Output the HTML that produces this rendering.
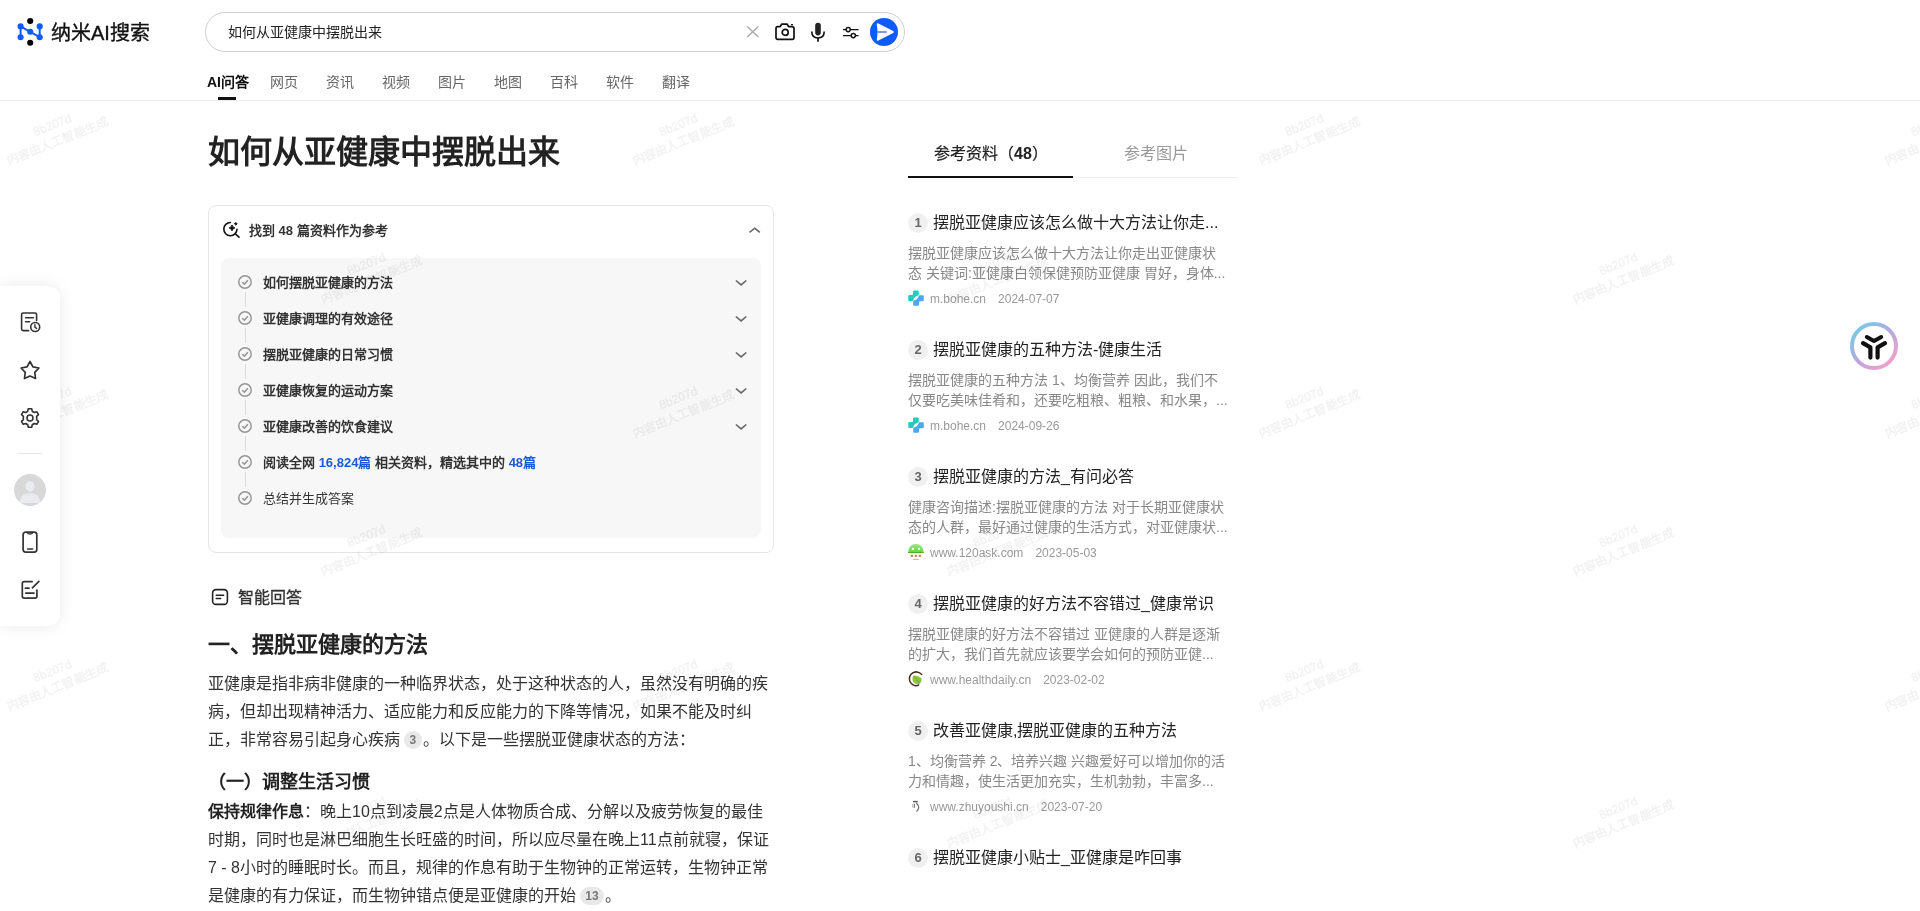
<!DOCTYPE html>
<html lang="zh-CN">
<head>
<meta charset="utf-8">
<title>纳米AI搜索</title>
<style>
*{margin:0;padding:0;box-sizing:border-box}
html,body{width:1920px;height:911px;overflow:hidden;background:#fff;font-family:"Liberation Sans",sans-serif;color:#222}
.a{position:absolute}
.t{white-space:nowrap}
svg{display:block}
/* watermark */
.wm{position:absolute;z-index:10;width:140px;height:36px;transform:rotate(-22deg);color:#f1f1f1;-webkit-text-stroke:0.3px #f1f1f1;mix-blend-mode:multiply;text-align:center;font-size:12px;line-height:18px;white-space:nowrap;pointer-events:none}
.wm i{font-style:normal;position:relative;left:1.5px;top:1px}
/* header */
.hdr-line{left:0;top:100px;width:1920px;height:1px;background:#eeeeee}
.search{left:205px;top:12px;width:700px;height:40px;border:1px solid #cfcfcf;border-radius:20px}
.q{left:228px;top:22px;font-size:14px;line-height:20px;color:#222}
.tab{top:72px;font-size:14px;line-height:20px;color:#666}
.tab.on{color:#111;font-weight:bold}
/* main */
.title{left:208px;top:129px;font-size:32px;line-height:46px;font-weight:bold;color:#222}
.box{left:208px;top:205px;width:566px;height:348px;border:1px solid #e6e6e6;border-radius:8px}
.inner{left:221px;top:258px;width:540px;height:280px;background:#f7f7f7;border-radius:8px}
.row{left:263px;font-size:13px;line-height:18px;color:#333;font-weight:bold}
.row.n{font-weight:normal}
.blue{color:#1a5ad8}
.chk{left:237px}
.vl{left:245px;width:1px;background:#dcdcdc}
.para{left:208px;width:566px;font-size:16px;line-height:28px;color:#333}
.cite{display:inline-block;width:17.5px;height:18px;border-radius:9px;background:#e8e8e8;color:#777;font-size:12px;font-weight:bold;line-height:19px;text-align:center;vertical-align:1px;margin:0 1px 0 4px}
/* right */
.rtab{top:143px;font-size:16px;line-height:22px}
.item{left:908px;width:320px}
.badge{position:absolute;left:0;top:0;width:20px;height:20px;border-radius:10px;background:#f0f0f0;color:#666;font-size:13px;font-weight:bold;line-height:20px;text-align:center}
.ititle{position:absolute;left:25px;top:-1px;font-size:16px;line-height:22px;color:#222;white-space:nowrap}
.snip{position:absolute;left:0;top:30px;width:340px;font-size:14px;line-height:20px;color:#888;height:40px;white-space:nowrap}
.meta{position:absolute;left:0;top:78px;height:16px;font-size:12px;line-height:16px;color:#999;white-space:nowrap;display:flex;align-items:center}
.fav{width:16px;height:16px;flex:none;position:relative;top:-1px}
.dom{margin-left:6px}
.dt{margin-left:12px}
/* sidebar */
.side{left:0;top:286px;width:60px;height:340px;background:#fff;border-radius:0 12px 12px 0;box-shadow:0 0 16px rgba(0,0,0,0.09)}
</style>
</head>
<body>

<!-- watermarks -->
<div class="wm" style="left:-16px;top:115px"><i>8b207d</i><br>内容由人工智能生成</div>
<div class="wm" style="left:610px;top:115px"><i>8b207d</i><br>内容由人工智能生成</div>
<div class="wm" style="left:1236px;top:115px"><i>8b207d</i><br>内容由人工智能生成</div>
<div class="wm" style="left:1862px;top:115px"><i>8b207d</i><br>内容由人工智能生成</div>
<div class="wm" style="left:-16px;top:388px"><i>8b207d</i><br>内容由人工智能生成</div>
<div class="wm" style="left:610px;top:388px"><i>8b207d</i><br>内容由人工智能生成</div>
<div class="wm" style="left:1236px;top:388px"><i>8b207d</i><br>内容由人工智能生成</div>
<div class="wm" style="left:1862px;top:388px"><i>8b207d</i><br>内容由人工智能生成</div>
<div class="wm" style="left:-16px;top:661px"><i>8b207d</i><br>内容由人工智能生成</div>
<div class="wm" style="left:610px;top:661px"><i>8b207d</i><br>内容由人工智能生成</div>
<div class="wm" style="left:1236px;top:661px"><i>8b207d</i><br>内容由人工智能生成</div>
<div class="wm" style="left:1862px;top:661px"><i>8b207d</i><br>内容由人工智能生成</div>
<div class="wm" style="left:298px;top:254px"><i>8b207d</i><br>内容由人工智能生成</div>
<div class="wm" style="left:924px;top:254px"><i>8b207d</i><br>内容由人工智能生成</div>
<div class="wm" style="left:1550px;top:254px"><i>8b207d</i><br>内容由人工智能生成</div>
<div class="wm" style="left:298px;top:526px"><i>8b207d</i><br>内容由人工智能生成</div>
<div class="wm" style="left:924px;top:526px"><i>8b207d</i><br>内容由人工智能生成</div>
<div class="wm" style="left:1550px;top:526px"><i>8b207d</i><br>内容由人工智能生成</div>
<div class="wm" style="left:298px;top:798px"><i>8b207d</i><br>内容由人工智能生成</div>
<div class="wm" style="left:924px;top:798px"><i>8b207d</i><br>内容由人工智能生成</div>
<div class="wm" style="left:1550px;top:798px"><i>8b207d</i><br>内容由人工智能生成</div>


<!-- ============ HEADER ============ -->
<svg class="a" style="left:10px;top:12px" width="40" height="40" viewBox="10 12 40 40">
  <g stroke="#0f5bff" stroke-width="2" fill="none">
    <line x1="20.6" y1="26.4" x2="20.6" y2="37.2"/>
    <line x1="39.7" y1="26.4" x2="39.7" y2="37.2"/>
    <polyline points="20.6,26.4 30.2,31.8 39.7,37.2"/>
  </g>
  <g fill="#0f5bff">
    <circle cx="20.6" cy="26.4" r="3.05"/><circle cx="20.6" cy="37.2" r="3.05"/>
    <circle cx="39.7" cy="26.4" r="3.05"/><circle cx="39.7" cy="37.2" r="3.05"/>
    <circle cx="30.2" cy="31.8" r="3.05"/>
  </g>
  <g fill="#000"><circle cx="30.2" cy="21" r="3.05"/><circle cx="30.2" cy="42.7" r="3.05"/></g>
</svg>
<div class="a t" style="left:51px;top:19px;font-size:20px;line-height:28px;color:#111;-webkit-text-stroke:0.35px #111">纳米AI搜索</div>

<div class="a search"></div>
<div class="a t q">如何从亚健康中摆脱出来</div>
<!-- clear X -->
<svg class="a" style="left:745px;top:24px" width="16" height="16" viewBox="0 0 16 16">
  <path d="M2.2 2.4 L13.4 13 M13.4 2.4 L2.2 13" stroke="#a8a8a8" stroke-width="1.4" fill="none"/>
</svg>
<!-- camera -->
<svg class="a" style="left:774px;top:21px" width="22" height="21" viewBox="0 0 22 21">
  <path d="M3.5 5.6 H6.2 L7.6 3.2 H13.2 L14.6 5.6 H18 Q20 5.6 20 7.6 V16.6 Q20 18.3 18.3 18.3 H3.7 Q2 18.3 2 16.6 V7.4 Q2 5.6 3.5 5.6 Z" stroke="#111" stroke-width="1.7" fill="none" stroke-linejoin="round"/>
  <circle cx="11.2" cy="11.4" r="3" stroke="#111" stroke-width="1.7" fill="none"/>
  <path d="M17 3.6 H19" stroke="#111" stroke-width="1.3"/>
</svg>
<!-- mic -->
<svg class="a" style="left:809px;top:21px" width="18" height="22" viewBox="0 0 18 22">
  <rect x="6.2" y="1.8" width="5.6" height="12.6" rx="2.8" fill="#222"/>
  <path d="M2.8 10.6 Q2.8 17 9 17 Q15.2 17 15.2 10.6" stroke="#111" stroke-width="1.6" fill="none"/>
  <path d="M9 17 V20.8" stroke="#111" stroke-width="1.7"/>
</svg>
<!-- sliders -->
<svg class="a" style="left:841px;top:24px" width="20" height="17" viewBox="0 0 20 17">
  <path d="M2 5.6 H17.5 M2 11.6 H17.5" stroke="#111" stroke-width="1.4"/>
  <circle cx="7.2" cy="5.6" r="2.1" fill="#fff" stroke="#111" stroke-width="1.4"/>
  <circle cx="12.3" cy="11.6" r="2.1" fill="#fff" stroke="#111" stroke-width="1.4"/>
</svg>
<!-- send -->
<svg class="a" style="left:870px;top:18px" width="28" height="28" viewBox="0 0 28 28">
  <circle cx="14" cy="14" r="14" fill="#0f5bff"/>
  <path d="M8.4 5.5 Q6.5 4.6 6.8 6.8 Q7.5 10.4 7.5 14 Q7.5 17.6 6.8 21.2 Q6.5 23.4 8.4 22.5 L23.2 15 Q24.6 14 23.2 13 Z" fill="#fff"/>
  <path d="M7.4 14 H16.8" stroke="#4f6fc4" stroke-width="1.4"/>
</svg>

<div class="a t tab on" style="left:207px">AI问答</div>
<div class="a" style="left:218px;top:97px;width:18px;height:3px;background:#111"></div>
<div class="a t tab" style="left:270px">网页</div>
<div class="a t tab" style="left:326px">资讯</div>
<div class="a t tab" style="left:382px">视频</div>
<div class="a t tab" style="left:438px">图片</div>
<div class="a t tab" style="left:494px">地图</div>
<div class="a t tab" style="left:550px">百科</div>
<div class="a t tab" style="left:606px">软件</div>
<div class="a t tab" style="left:662px">翻译</div>
<div class="a hdr-line"></div>

<!-- ============ SIDEBAR ============ -->
<div style="position:absolute;left:0;top:0;z-index:20">
<div class="a side"></div>
<!-- history doc -->
<svg class="a" style="left:18px;top:310px" width="24" height="24" viewBox="0 0 24 24">
  <path d="M10.6 20.6 H5.2 Q3.6 20.6 3.6 19 V4.6 Q3.6 3 5.2 3 H17 Q18.6 3 18.6 4.6 V10.6" stroke="#333" stroke-width="1.6" fill="none" stroke-linecap="round"/>
  <path d="M7.6 7.8 H15.4 M7.6 11.8 H11.6" stroke="#333" stroke-width="1.6" stroke-linecap="round"/>
  <circle cx="17.2" cy="17" r="4.5" stroke="#333" stroke-width="1.6" fill="#fff"/>
  <path d="M16.9 14.8 V17.1 L18.6 18.6" stroke="#333" stroke-width="1.4" fill="none" stroke-linecap="round"/>
</svg>
<!-- star -->
<svg class="a" style="left:18px;top:358px" width="24" height="24" viewBox="0 0 24 24">
  <path d="M12.00 3.50 L14.94 8.85 L20.94 10.00 L16.76 14.45 L17.53 20.50 L12.00 17.90 L6.47 20.50 L7.24 14.45 L3.06 10.00 L9.06 8.85Z" stroke="#333" stroke-width="1.7" fill="none" stroke-linejoin="round"/>
</svg>
<!-- gear -->
<svg class="a" style="left:18px;top:406px" width="24" height="24" viewBox="0 0 24 24">
  <path d="M10.3 2.8 H13.7 L14.3 5.4 Q15.4 5.8 16.3 6.5 L18.8 5.7 L20.5 8.6 L18.6 10.4 Q18.8 12 18.6 13.6 L20.5 15.4 L18.8 18.3 L16.3 17.5 Q15.4 18.2 14.3 18.6 L13.7 21.2 H10.3 L9.7 18.6 Q8.6 18.2 7.7 17.5 L5.2 18.3 L3.5 15.4 L5.4 13.6 Q5.2 12 5.4 10.4 L3.5 8.6 L5.2 5.7 L7.7 6.5 Q8.6 5.8 9.7 5.4 Z" stroke="#333" stroke-width="1.6" fill="none" stroke-linejoin="round"/>
  <circle cx="12" cy="12" r="3" stroke="#333" stroke-width="1.6" fill="none"/>
</svg>
<div class="a" style="left:18px;top:453px;width:24px;height:1px;background:#e6e6e6"></div>
<!-- avatar -->
<svg class="a" style="left:14px;top:474px" width="32" height="32" viewBox="0 0 32 32">
  <circle cx="16" cy="16" r="16" fill="#d8d8d8"/>
  <clipPath id="avc"><circle cx="16" cy="16" r="16"/></clipPath>
  <g clip-path="url(#avc)" fill="#e9ebef">
    <ellipse cx="16" cy="12.3" rx="4.6" ry="5.3"/>
    <path d="M5.5 29 Q6.5 20 13 19.5 H19 Q25.5 20 26.5 29 Z"/>
  </g>
</svg>
<!-- phone -->
<svg class="a" style="left:18px;top:530px" width="24" height="24" viewBox="0 0 24 24">
  <rect x="5.1" y="2.2" width="13.7" height="20" rx="2.6" stroke="#333" stroke-width="1.7" fill="none"/>
  <path d="M9.4 3 Q9.8 4 12 4 Q14.2 4 14.6 3" stroke="#333" stroke-width="1.4" fill="none"/>
  <path d="M9.6 19 H14.6" stroke="#333" stroke-width="1.6" stroke-linecap="round"/>
</svg>
<!-- edit -->
<svg class="a" style="left:18px;top:578px" width="24" height="24" viewBox="0 0 24 24">
  <path d="M14.2 3.6 H6.2 Q4.3 3.6 4.3 5.5 V18.3 Q4.3 20.2 6.2 20.2 H17 Q18.9 20.2 18.9 18.3 V12" stroke="#333" stroke-width="1.7" fill="none" stroke-linecap="round"/>
  <path d="M7.4 10.2 H11 M7.8 15.1 H16" stroke="#333" stroke-width="1.7" stroke-linecap="round"/>
  <path d="M14.4 9.9 L20.9 3.4" stroke="#333" stroke-width="1.7" stroke-linecap="round"/>
</svg>

</div>

<!-- ============ MAIN ============ -->
<div class="a t title">如何从亚健康中摆脱出来</div>

<div class="a box"></div>
<svg class="a" style="left:221px;top:220px" width="20" height="20" viewBox="0 0 20 20">
  <path d="M9.4 2.5 A6.6 6.6 0 1 0 16 9.3" stroke="#111" stroke-width="1.6" fill="none" stroke-linecap="round"/>
  <path d="M14.4 13.8 L18 17.1" stroke="#111" stroke-width="1.6" stroke-linecap="round"/>
  <path d="M11 4.9 Q11.4 7.3 13.9 7.9 Q11.4 8.5 11 10.9 Q10.6 8.5 8.1 7.9 Q10.6 7.3 11 4.9Z" fill="#111" stroke="#111" stroke-width="0.9" stroke-linejoin="round"/>
  <path d="M14.8 2.4 L16.2 3.8 L14.8 5.2 L13.4 3.8Z" fill="#111" stroke="#111" stroke-width="0.8" stroke-linejoin="round"/>
</svg>
<div class="a t" style="left:249px;top:222px;font-size:13px;line-height:18px;color:#333;font-weight:bold">找到 48 篇资料作为参考</div>
<svg class="a" style="left:746px;top:224px" width="18" height="12" viewBox="0 0 18 12">
  <path d="M3.5 8.4 L8.8 4.2 L13.8 8.4" stroke="#666" stroke-width="1.6" fill="none"/>
</svg>

<div class="a inner"></div>
<svg class="a chk" style="top:274px" width="16" height="16" viewBox="0 0 16 16"><circle cx="8" cy="8" r="6.2" stroke="#969696" stroke-width="1.45" fill="none"/><path d="M5.2 8.2 L7.4 10.1 L10.9 6.2" stroke="#969696" stroke-width="1.5" fill="none"/></svg>
<div class="a t row" style="top:274px">如何摆脱亚健康的方法</div>
<svg class="a" style="left:733px;top:276px" width="16" height="12" viewBox="0 0 16 12"><path d="M2.9 4.5 L8.1 8.9 L13.3 4.5" stroke="#666" stroke-width="1.6" fill="none"/></svg>
<div class="a vl" style="top:292px;height:15px"></div>
<svg class="a chk" style="top:310px" width="16" height="16" viewBox="0 0 16 16"><circle cx="8" cy="8" r="6.2" stroke="#969696" stroke-width="1.45" fill="none"/><path d="M5.2 8.2 L7.4 10.1 L10.9 6.2" stroke="#969696" stroke-width="1.5" fill="none"/></svg>
<div class="a t row" style="top:310px">亚健康调理的有效途径</div>
<svg class="a" style="left:733px;top:312px" width="16" height="12" viewBox="0 0 16 12"><path d="M2.9 4.5 L8.1 8.9 L13.3 4.5" stroke="#666" stroke-width="1.6" fill="none"/></svg>
<div class="a vl" style="top:328px;height:15px"></div>
<svg class="a chk" style="top:346px" width="16" height="16" viewBox="0 0 16 16"><circle cx="8" cy="8" r="6.2" stroke="#969696" stroke-width="1.45" fill="none"/><path d="M5.2 8.2 L7.4 10.1 L10.9 6.2" stroke="#969696" stroke-width="1.5" fill="none"/></svg>
<div class="a t row" style="top:346px">摆脱亚健康的日常习惯</div>
<svg class="a" style="left:733px;top:348px" width="16" height="12" viewBox="0 0 16 12"><path d="M2.9 4.5 L8.1 8.9 L13.3 4.5" stroke="#666" stroke-width="1.6" fill="none"/></svg>
<div class="a vl" style="top:364px;height:15px"></div>
<svg class="a chk" style="top:382px" width="16" height="16" viewBox="0 0 16 16"><circle cx="8" cy="8" r="6.2" stroke="#969696" stroke-width="1.45" fill="none"/><path d="M5.2 8.2 L7.4 10.1 L10.9 6.2" stroke="#969696" stroke-width="1.5" fill="none"/></svg>
<div class="a t row" style="top:382px">亚健康恢复的运动方案</div>
<svg class="a" style="left:733px;top:384px" width="16" height="12" viewBox="0 0 16 12"><path d="M2.9 4.5 L8.1 8.9 L13.3 4.5" stroke="#666" stroke-width="1.6" fill="none"/></svg>
<div class="a vl" style="top:400px;height:15px"></div>
<svg class="a chk" style="top:418px" width="16" height="16" viewBox="0 0 16 16"><circle cx="8" cy="8" r="6.2" stroke="#969696" stroke-width="1.45" fill="none"/><path d="M5.2 8.2 L7.4 10.1 L10.9 6.2" stroke="#969696" stroke-width="1.5" fill="none"/></svg>
<div class="a t row" style="top:418px">亚健康改善的饮食建议</div>
<svg class="a" style="left:733px;top:420px" width="16" height="12" viewBox="0 0 16 12"><path d="M2.9 4.5 L8.1 8.9 L13.3 4.5" stroke="#666" stroke-width="1.6" fill="none"/></svg>
<div class="a vl" style="top:436px;height:15px"></div>
<svg class="a chk" style="top:454px" width="16" height="16" viewBox="0 0 16 16"><circle cx="8" cy="8" r="6.2" stroke="#969696" stroke-width="1.45" fill="none"/><path d="M5.2 8.2 L7.4 10.1 L10.9 6.2" stroke="#969696" stroke-width="1.5" fill="none"/></svg>
<div class="a t row" style="top:454px">阅读全网 <span class="blue">16,824篇</span> 相关资料，精选其中的 <span class="blue">48篇</span></div>
<div class="a vl" style="top:472px;height:15px"></div>
<svg class="a chk" style="top:490px" width="16" height="16" viewBox="0 0 16 16"><circle cx="8" cy="8" r="6.2" stroke="#969696" stroke-width="1.45" fill="none"/><path d="M5.2 8.2 L7.4 10.1 L10.9 6.2" stroke="#969696" stroke-width="1.5" fill="none"/></svg>
<div class="a t row n" style="top:490px">总结并生成答案</div>


<!-- 智能回答 -->
<svg class="a" style="left:210px;top:587px" width="20" height="20" viewBox="0 0 20 20">
  <rect x="2.6" y="2.6" width="14.8" height="14.8" rx="3.4" stroke="#222" stroke-width="1.6" fill="none"/>
  <path d="M6.2 8.2 H13.6 M6.2 11.4 H10.6" stroke="#222" stroke-width="1.5" stroke-linecap="round"/>
</svg>
<div class="a t" style="left:238px;top:586px;font-size:16px;line-height:24px;color:#333;-webkit-text-stroke:0.35px #333">智能回答</div>

<div class="a t" style="left:208px;top:630px;font-size:22px;line-height:30px;color:#222;font-weight:bold">一、摆脱亚健康的方法</div>
<div class="a para" style="top:670px">亚健康是指非病非健康的一种临界状态，处于这种状态的人，虽然没有明确的疾病，但却出现精神活力、适应能力和反应能力的下降等情况，如果不能及时纠正，非常容易引起身心疾病<span class="cite">3</span>。以下是一些摆脱亚健康状态的方法：</div>
<div class="a t" style="left:208px;top:769px;font-size:18px;line-height:26px;color:#222;font-weight:bold">（一）调整生活习惯</div>
<div class="a para" style="top:798px"><b style="color:#222">保持规律作息</b>：晚上10点到凌晨2点是人体物质合成、分解以及疲劳恢复的最佳时期，同时也是淋巴细胞生长旺盛的时间，所以应尽量在晚上11点前就寝，保证7 - 8小时的睡眠时长。而且，规律的作息有助于生物钟的正常运转，生物钟正常是健康的有力保证，而生物钟错点便是亚健康的开始<span class="cite" style="width:24px">13</span>。</div>

<!-- ============ RIGHT PANEL ============ -->
<div class="a t rtab" style="left:934px;color:#222;-webkit-text-stroke:0.2px #222">参考资料（<b style="-webkit-text-stroke:0">48</b>）</div>
<div class="a t rtab" style="left:1124px;color:#999">参考图片</div>
<div class="a" style="left:908px;top:177px;width:330px;height:1px;background:#eeeeee"></div>
<div class="a" style="left:908px;top:176px;width:165px;height:2px;background:#111"></div>

<div class="a item" style="top:213px">
<div class="badge">1</div><div class="ititle">摆脱亚健康应该怎么做十大方法让你走...</div>
<div class="snip">摆脱亚健康应该怎么做十大方法让你走出亚健康状<br>态 关键词:亚健康白领保健预防亚健康 胃好，身体...</div>
<div class="meta"><svg class="fav" width="16" height="16" viewBox="0 0 16 16"><path d="M6 0.4 H9.6 Q10.8 0.4 10.8 1.6 V4.4 Q10.8 5.2 10 5.6 L7.6 6.8 Q6 7.6 5.6 9.4 L5.4 10.2 Q5.2 11 4.4 11 H1.4 Q0.2 11 0.2 9.8 V6.2 Q0.2 5 1.4 5 H4.2 Q5 5 5 4.2 V1.4 Q5 0.4 6 0.4Z" fill="#22cdbf"/><path d="M10 15.8 H6.4 Q5.2 15.8 5.2 14.6 V11.8 Q5.2 11 6 10.6 L8.4 9.4 Q10 8.6 10.4 6.8 L10.6 6 Q10.8 5.2 11.6 5.2 H14.6 Q15.8 5.2 15.8 6.4 V10 Q15.8 11.2 14.6 11.2 H11.8 Q11 11.2 11 12 V14.8 Q11 15.8 10 15.8Z" fill="#4ea6ec"/></svg><span class="dom">m.bohe.cn</span><span class="dt">2024-07-07</span></div>
</div>
<div class="a item" style="top:340px">
<div class="badge">2</div><div class="ititle">摆脱亚健康的五种方法-健康生活</div>
<div class="snip">摆脱亚健康的五种方法 1、均衡营养 因此，我们不<br>仅要吃美味佳肴和，还要吃粗粮、粗粮、和水果，...</div>
<div class="meta"><svg class="fav" width="16" height="16" viewBox="0 0 16 16"><path d="M6 0.4 H9.6 Q10.8 0.4 10.8 1.6 V4.4 Q10.8 5.2 10 5.6 L7.6 6.8 Q6 7.6 5.6 9.4 L5.4 10.2 Q5.2 11 4.4 11 H1.4 Q0.2 11 0.2 9.8 V6.2 Q0.2 5 1.4 5 H4.2 Q5 5 5 4.2 V1.4 Q5 0.4 6 0.4Z" fill="#22cdbf"/><path d="M10 15.8 H6.4 Q5.2 15.8 5.2 14.6 V11.8 Q5.2 11 6 10.6 L8.4 9.4 Q10 8.6 10.4 6.8 L10.6 6 Q10.8 5.2 11.6 5.2 H14.6 Q15.8 5.2 15.8 6.4 V10 Q15.8 11.2 14.6 11.2 H11.8 Q11 11.2 11 12 V14.8 Q11 15.8 10 15.8Z" fill="#4ea6ec"/></svg><span class="dom">m.bohe.cn</span><span class="dt">2024-09-26</span></div>
</div>
<div class="a item" style="top:467px">
<div class="badge">3</div><div class="ititle">摆脱亚健康的方法_有问必答</div>
<div class="snip">健康咨询描述:摆脱亚健康的方法 对于长期亚健康状<br>态的人群，最好通过健康的生活方式，对亚健康状...</div>
<div class="meta"><svg class="fav" width="16" height="16" viewBox="0 0 16 16"><defs><linearGradient id="ag" x1="0" y1="0" x2="0" y2="1"><stop offset="0" stop-color="#9be884"/><stop offset="1" stop-color="#5ad83a"/></linearGradient></defs><path d="M0.2 9 C0.2 3.2 3.6 0 7.9 0 C12.2 0 15.6 3.2 15.6 9 Z" fill="url(#ag)"/><rect x="0.2" y="8.1" width="15.4" height="0.9" fill="#4aa62e"/><path d="M1.6 9 H14.2 V12.6 Q14.2 13.6 13.2 13.6 H2.6 Q1.6 13.6 1.6 12.6Z" fill="#fdf2d8"/><rect x="2.9" y="10.9" width="2.1" height="1.9" fill="#a88868"/><rect x="6.85" y="10.9" width="2.1" height="1.9" fill="#a88868"/><rect x="10.8" y="10.9" width="2.1" height="1.9" fill="#a88868"/><rect x="3.9" y="3.9" width="2.1" height="2.1" fill="#fff"/><rect x="10" y="3.9" width="2.1" height="2.1" fill="#fff"/><ellipse cx="7.9" cy="15.4" rx="3.4" ry="0.6" fill="#bbb"/></svg><span class="dom">www.120ask.com</span><span class="dt">2023-05-03</span></div>
</div>
<div class="a item" style="top:594px">
<div class="badge">4</div><div class="ititle">摆脱亚健康的好方法不容错过_健康常识</div>
<div class="snip">摆脱亚健康的好方法不容错过 亚健康的人群是逐渐<br>的扩大，我们首先就应该要学会如何的预防亚健...</div>
<div class="meta"><svg class="fav" width="16" height="16" viewBox="0 0 16 16"><path d="M13.6 3.4 Q11.4 0.6 7.4 1 Q2 1.8 1.4 7.6 Q1.4 13 6.6 14.6 Q9 15 10.6 14" stroke="#4a2e1e" stroke-width="1.5" fill="none" stroke-linecap="round"/><path d="M5.2 4.4 Q10.4 4.2 13.6 7.2 Q14 11.6 10.6 13.2 Q6.4 13.6 4.6 9.4 Q4.2 6.4 5.2 4.4Z" fill="#8cc63e"/><path d="M6 5.6 Q9.6 8.4 11.6 12.4" stroke="#5a8e22" stroke-width="0.6" fill="none"/><path d="M6.4 1.2 Q7.8 0 9.6 0.6" stroke="#4a2e1e" stroke-width="0.8" fill="none"/></svg><span class="dom">www.healthdaily.cn</span><span class="dt">2023-02-02</span></div>
</div>
<div class="a item" style="top:721px">
<div class="badge">5</div><div class="ititle">改善亚健康,摆脱亚健康的五种方法</div>
<div class="snip">1、均衡营养 2、培养兴趣 兴趣爱好可以增加你的活<br>力和情趣，使生活更加充实，生机勃勃，丰富多...</div>
<div class="meta"><svg class="fav" width="16" height="16" viewBox="0 0 16 16"><path d="M5 3.6 H9.8" stroke="#5a5a5a" stroke-width="1.5"/><path d="M4.6 6 V9.6" stroke="#b0b0b0" stroke-width="0.8"/><path d="M6.3 5.8 V9.7" stroke="#666" stroke-width="1.1"/><path d="M8.3 5 Q10.7 7.2 10.7 9.6 Q10.5 12 8.4 13.4" stroke="#6a6a6a" stroke-width="1.2" fill="none"/></svg><span class="dom">www.zhuyoushi.cn</span><span class="dt">2023-07-20</span></div>
</div>
<div class="a item" style="top:848px">
<div class="badge">6</div><div class="ititle">摆脱亚健康小贴士_亚健康是咋回事</div>
</div>


<!-- floating button -->
<svg class="a" style="left:1848px;top:320px" width="52" height="52" viewBox="0 0 52 52">
  <defs>
    <linearGradient id="rg" x1="0.15" y1="0.1" x2="0.85" y2="0.9">
      <stop offset="0" stop-color="#7cc9e4"/>
      <stop offset="0.5" stop-color="#b8a8e0"/>
      <stop offset="1" stop-color="#f0a0cc"/>
    </linearGradient>
  </defs>
  <circle cx="26" cy="26" r="22" stroke="url(#rg)" stroke-width="4" fill="#fff"/>
  <g stroke="#111" fill="none" stroke-linecap="round" stroke-linejoin="round">
    <polyline points="18.8,17 26,21 33.2,17" stroke-width="4"/>
    <polyline points="15,23.2 22.4,27.4 22.4,37.6" stroke-width="4.2"/>
    <polyline points="37,23.2 29.6,27.4 29.6,37.6" stroke-width="4.2"/>
  </g>
</svg>

</body>
</html>
